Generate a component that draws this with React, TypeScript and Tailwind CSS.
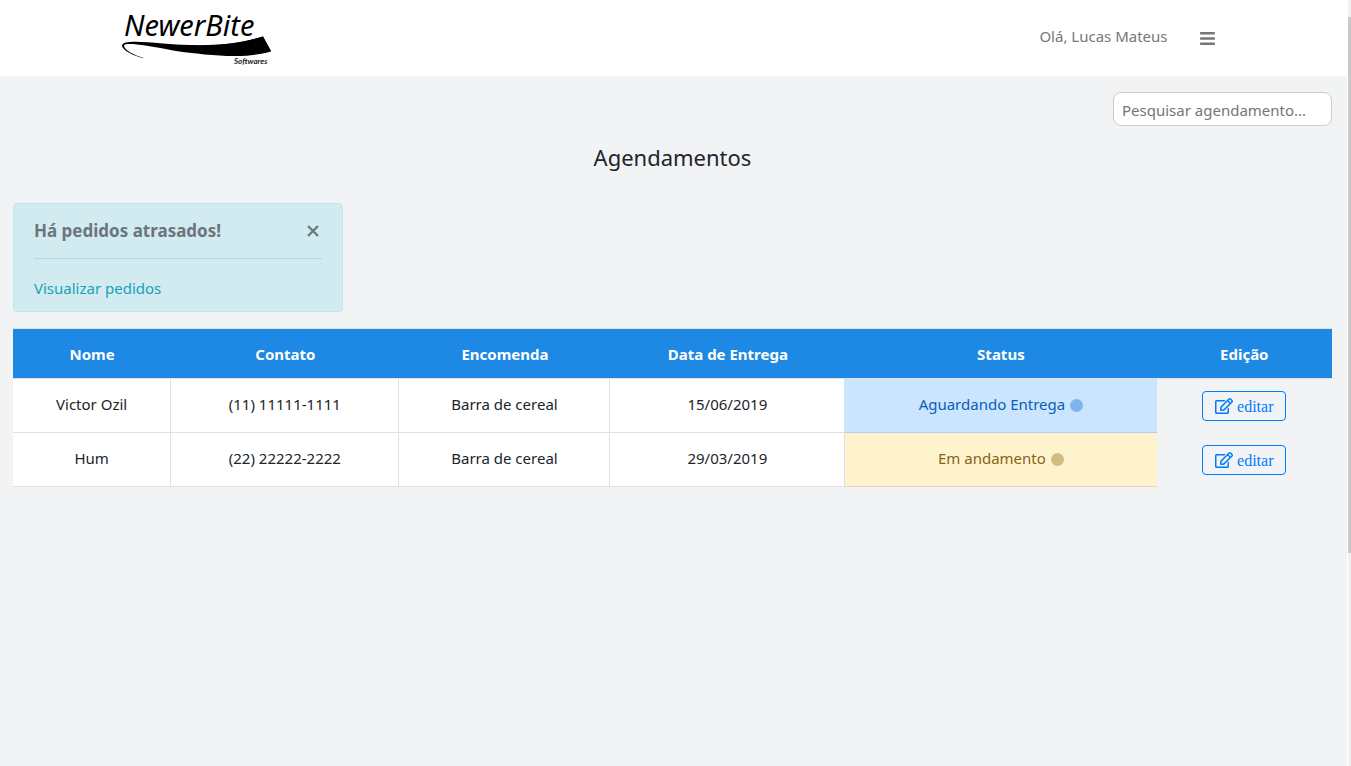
import { FaBars, FaRegEdit } from "react-icons/fa";

type Status = "waiting" | "progress";

interface Booking {
  name: string;
  phone: string;
  order: string;
  date: string;
  status: Status;
}

const bookings: Booking[] = [
  { name: "Victor Ozil", phone: "(11) 11111-1111", order: "Barra de cereal", date: "15/06/2019", status: "waiting" },
  { name: "Hum", phone: "(22) 22222-2222", order: "Barra de cereal", date: "29/03/2019", status: "progress" },
];

const statuses = {
  waiting: { label: "Aguardando Entrega", cell: "bg-[#cce5ff] text-[#0a5db8] border-[#b3cdec]", dot: "bg-[#80b3ea]" },
  progress: { label: "Em andamento", cell: "bg-[#fff3cd] text-[#856414] border-[#e3d8b6]", dot: "bg-[#d1bd80]" },
};

const columns = [
  { title: "Nome", width: "w-[12%]" },
  { title: "Contato", width: "w-[17.3%]" },
  { title: "Encomenda", width: "w-[16%]" },
  { title: "Data de Entrega", width: "w-[17.8%]" },
  { title: "Status", width: "w-[23.6%]" },
  { title: "Edição", width: "w-[13.3%]" },
];

function Logo() {
  return (
    <svg className="h-[76px] w-[156px]" viewBox="0 0 156 76" role="img" aria-label="NewerBite Softwares">
      <defs>
        <filter id="soft" x="-5%" y="-20%" width="110%" height="140%">
          <feGaussianBlur stdDeviation="0.7" />
        </filter>
      </defs>
      <text x="5" y="36" fontSize="29" fontStyle="italic" fontFamily="Noto Sans, sans-serif" fill="#000">
        NewerBite
      </text>
      <path
        d="M26 58.500C14 56 3 50 3 45.500C4 40.500 20 41.500 44 43.500C82 46.500 114 46 144 36.500L152 51.500C126 59 92 56 54 50.500C26 45 6 42 5 45.500C5 50 15 55 26 58.500Z"
        fill="#000"
        filter="url(#soft)"
      />
      <path
        d="M22 43C70 46.500 108 48 144 36.500L152 51C122 57 86 54 54 49.500C38 46.500 28 45 22 43Z"
        fill="#000"
      />
      <text x="115" y="64" fontSize="8" fontStyle="italic" fontWeight="700" fontFamily="Lato, sans-serif" fill="#222">
        Softwares
      </text>
    </svg>
  );
}

function Header() {
  return (
    <header className="bg-white">
      <div className="mx-auto flex h-[76px] max-w-[1110px] items-center justify-between pr-[14px]">
        <a href="#inicio">
          <Logo />
        </a>
        <div className="flex items-center gap-8 text-[#777]">
          <span className="pb-1">Olá, Lucas Mateus</span>
          <button type="button" aria-label="Menu">
            <FaBars className="h-[17px] w-[15px]" />
          </button>
        </div>
      </div>
    </header>
  );
}

function LateAlert() {
  return (
    <section className="mt-7 w-[330px] rounded border border-[#bee5eb] bg-[#d1ebf0] px-5 pt-[11px] pb-[9px]">
      <div className="flex h-8 items-center justify-between text-[#6c757d]">
        <h2 className="text-[17px] font-bold">Há pedidos atrasados!</h2>
        <button type="button" aria-label="Fechar" className="pr-[3px]">
          <svg className="size-3" viewBox="0 0 12 12" fill="none" stroke="currentColor" strokeWidth="2.300">
            <path d="M1 1l10 10M11 1L1 11" />
          </svg>
        </button>
      </div>
      <div role="separator" className="mt-[11px] mb-[15px] h-px bg-[#abdde5]" />
      <a href="#pedidos" className="block leading-7 text-[#17a2b8]">
        Visualizar pedidos
      </a>
    </section>
  );
}

function BookingTable() {
  const cell = "border-r border-b border-[#dee2e6] bg-white pb-[3px]";
  return (
    <table className="mt-4 w-full table-fixed border-separate border-spacing-0 text-center">
      <thead>
        <tr className="h-[51px] bg-[#1e88e5] text-white">
          {columns.map((c) => (
            <th key={c.title} scope="col" className={`${c.width} border-y border-[#dee2e6] pt-px font-bold`}>
              {c.title}
            </th>
          ))}
        </tr>
      </thead>
      <tbody>
        {bookings.map((b) => {
          const s = statuses[b.status];
          return (
            <tr key={b.name} className="h-[54px] text-[#212529]">
              <td className={cell}>{b.name}</td>
              <td className={cell}>{b.phone}</td>
              <td className={cell}>{b.order}</td>
              <td className={cell}>{b.date}</td>
              <td className={`border-b pb-[3px] ${s.cell}`}>
                <span className="inline-flex items-center gap-[5px]">
                  {s.label}
                  <span className={`mt-[3px] size-[13px] rounded-full ${s.dot}`} />
                </span>
              </td>
              <td>
                <button
                  type="button"
                  className="inline-flex h-[30px] items-center gap-1 rounded border border-[#007bff] px-3 align-middle font-['Liberation_Serif',serif] text-base text-[#007bff]"
                >
                  <FaRegEdit className="size-[18px]" />
                  <span className="pt-0.5">editar</span>
                </button>
              </td>
            </tr>
          );
        })}
      </tbody>
    </table>
  );
}

export default function App() {
  return (
    <div className="flex min-h-screen bg-[#f1f3f5] font-['Noto_Sans','Open_Sans',sans-serif] text-[15px]">
      <div className="min-w-0 flex-1">
        <Header />
        <main className="pt-4 pr-[15px] pl-[13px]">
          <div className="flex justify-end">
            <input
              type="search"
              aria-label="Pesquisar agendamento"
              placeholder="Pesquisar agendamento..."
              className="h-[34px] w-[219px] rounded-lg border border-[#ccc] bg-white px-2 pt-0.5 placeholder:text-[#757575]"
            />
          </div>
          <h1 className="mt-[13px] text-center text-[22px] leading-9 text-[#212529]">Agendamentos</h1>
          <LateAlert />
          <BookingTable />
        </main>
      </div>
      <div className="w-1 border-l border-white bg-[#f1f1f1] pt-[17px]" aria-hidden="true">
        <div className="h-[70vh] bg-[#c9c9c9]" />
      </div>
    </div>
  );
}
